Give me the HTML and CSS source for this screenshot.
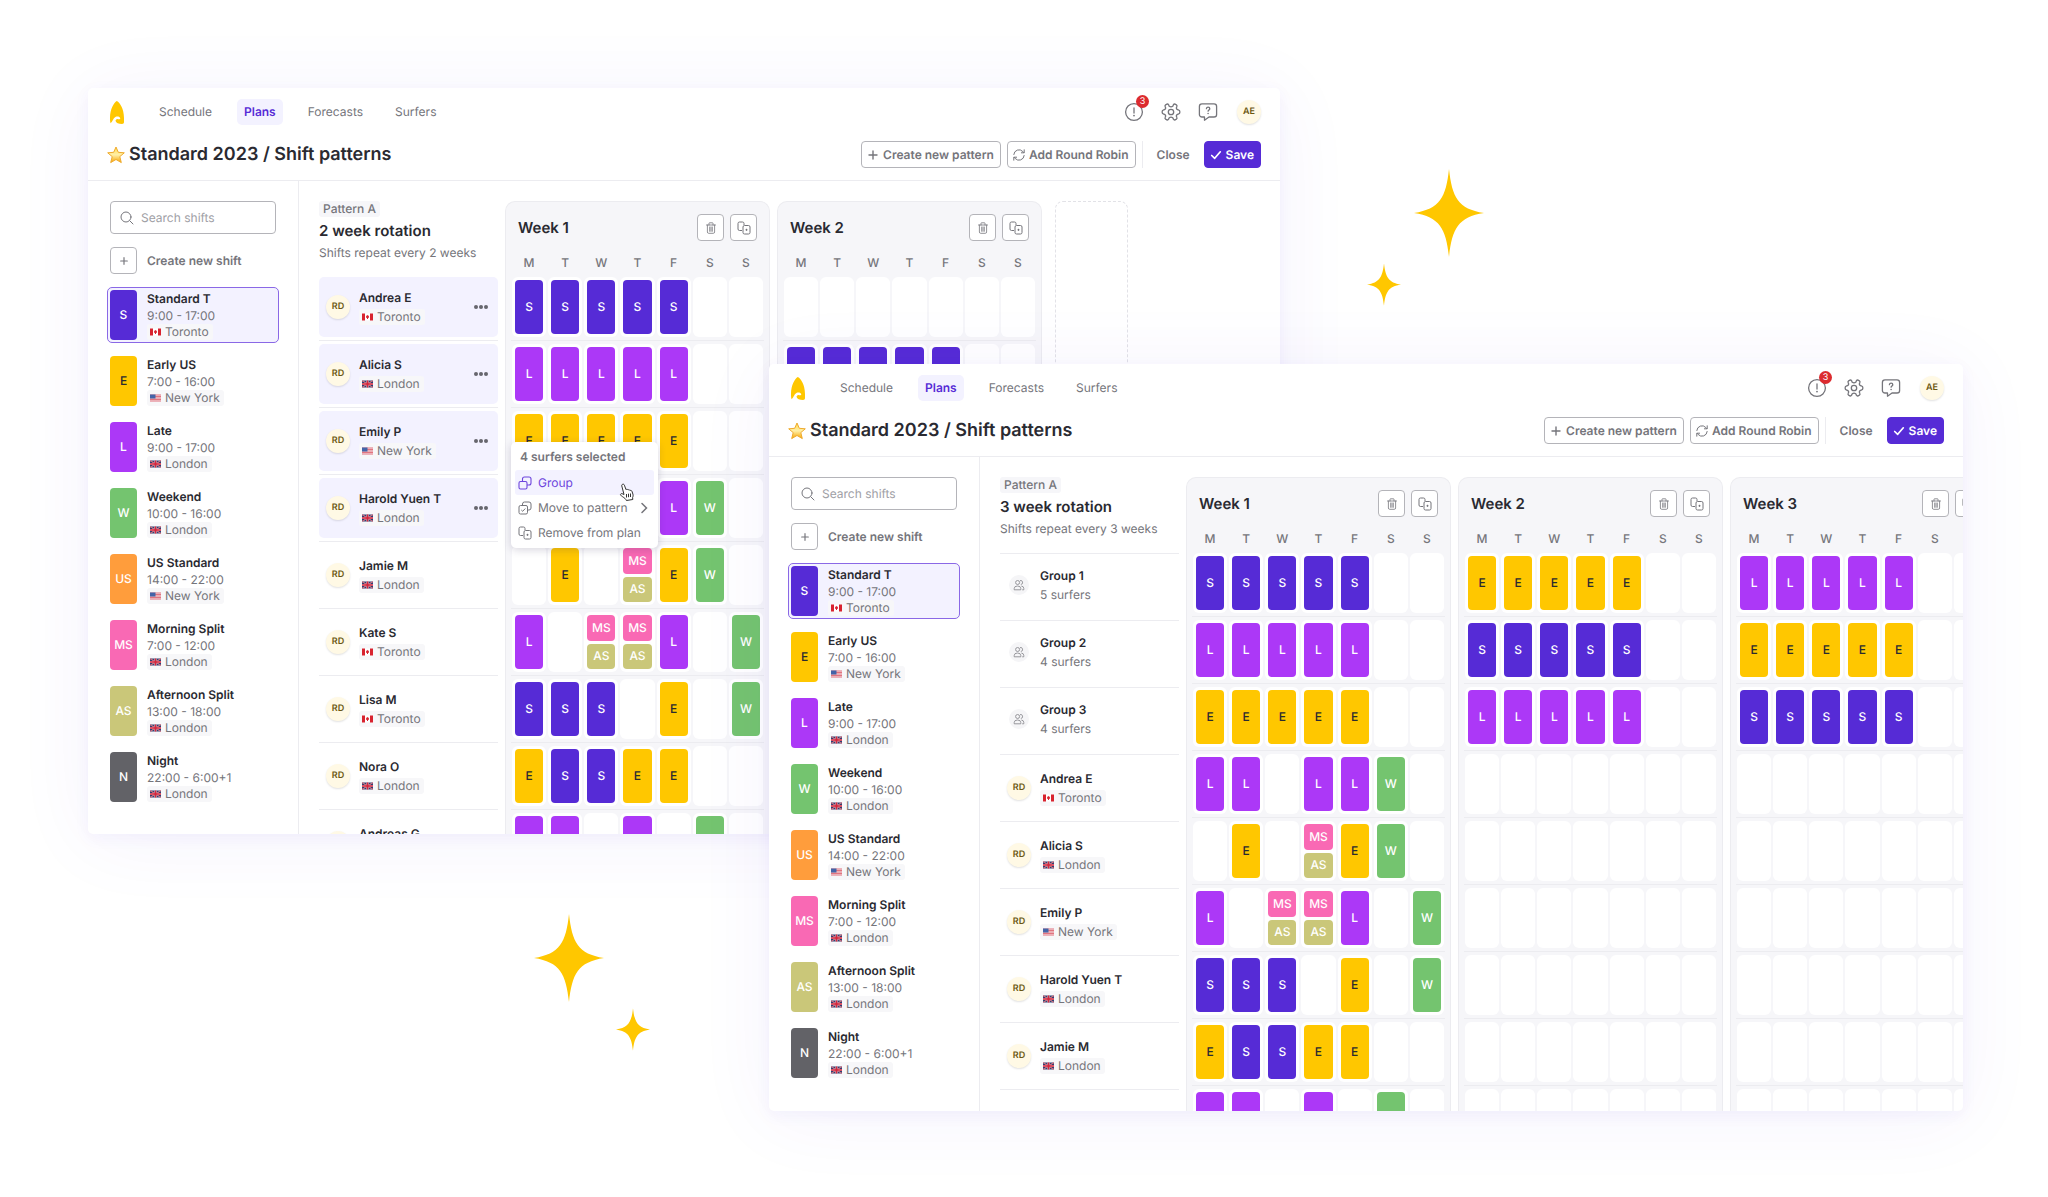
FILE: index.html
```html
<!DOCTYPE html>
<html lang="en">
<head>
<meta charset="utf-8">
<meta name="viewport" content="width=device-width, initial-scale=1">
<title>Shift patterns</title>
<link rel="stylesheet" href="styles.css">
</head>
<body>
<svg class="sprite" aria-hidden="true">
  <symbol id="logo" viewBox="0 0 14 23"><path fill="#ffc700" d="M6.800 0C10 1.600 14 8 14 17v4c0 1.400-.8 1.900-2 1.900-3.400 0-6-.9-6.400-2.900-.2-1.200.7-2.200 2-2.100.7.100 1.200.5 1.900.3.700-.2.900-.7.600-1.200-.9-1.400-2.900-1.800-4.700-.9C3 17.300 2.700 20.900.6 22.200 0 21 0 18.500 0 17 0 8 4 1.600 6.800 0z"/></symbol>
  <symbol id="star" viewBox="0 0 18 18"><defs><linearGradient id="gold" x1="0" y1="0" x2="0" y2="1"><stop offset="0" stop-color="#ffd84a"/><stop offset=".5" stop-color="#fff0a8"/><stop offset="1" stop-color="#f7a400"/></linearGradient></defs><path fill="url(#gold)" stroke="#eeaa2e" stroke-linejoin="round" d="M9 1l2.300 5.300 6 .5-4.500 3.800 1.500 6L9 13.500 3.700 16.600l1.500-6L.7 6.800l6-.5z"/></symbol>
  <symbol id="alert" viewBox="0 0 20 20"><g fill="none" stroke="currentColor" stroke-width="1.300" stroke-linecap="round"><circle cx="10" cy="10" r="8.400"/><path d="M10 6v5"/></g><circle cx="10" cy="13.600" r=".9" fill="currentColor"/></symbol>
  <symbol id="gear" viewBox="0 0 20 20"><g fill="none" stroke="currentColor" stroke-width="1.300" stroke-linejoin="round"><circle cx="10" cy="10" r="2.700"/><path d="M8.200 4.300 7.600 2.800Q6.900 1.600 5.700 2.200L4.600 2.900Q3.600 3.600 4.200 4.800L4.700 6Q4.400 7.500 3 7.900L2.300 8Q1.200 8.400 1.200 9.400v1.200q0 1 1.100 1.400l.7.100q1.400.4 1.700 1.900l-.5 1.200q-.6 1.200.4 1.900l1.100.7q1.200.6 1.900-.6l.6-1.500q1.800-1 3.600 0l.6 1.500q.7 1.200 1.900.6l1.100-.7q1-.7.4-1.900l-.5-1.200q.3-1.500 1.700-1.900l.7-.1q1.100-.4 1.100-1.400V9.400q0-1-1.100-1.400l-.7-.1q-1.400-.4-1.700-1.900l.5-1.200q.6-1.200-.4-1.900l-1.100-.7q-1.200-.6-1.900.6l-.6 1.500q-1.800 1-3.600 0z"/></g></symbol>
  <symbol id="help" viewBox="0 0 20 20"><g fill="none" stroke="currentColor" stroke-width="1.300" stroke-linejoin="round" stroke-linecap="round"><path d="M4 1.800h12a2.600 2.600 0 0 1 2.600 2.600v8a2.600 2.600 0 0 1-2.600 2.600h-5l-4.500 3.200V15H4a2.600 2.600 0 0 1-2.600-2.600v-8A2.600 2.600 0 0 1 4 1.800z"/><path d="M8.400 6.700c.1-1 .8-1.500 1.700-1.500 1 0 1.700.6 1.700 1.500 0 1.200-1.700 1.300-1.700 2.500"/></g><circle cx="10.100" cy="11.500" r=".8" fill="currentColor"/></symbol>
  <symbol id="plus" viewBox="0 0 12 12"><path d="M6 2v8M2 6h8" fill="none" stroke="currentColor" stroke-width="1.400" stroke-linecap="round"/></symbol>
  <symbol id="cycle" viewBox="0 0 12 12"><path d="M.8 5.500A5.200 5.200 0 0 1 9.800 2.500L11 3.700M11.200.8v3H8.400M11.200 6.500a5.200 5.200 0 0 1-9 3L1 8.300M.8 11.200v-3h2.800" fill="none" stroke="currentColor" stroke-linecap="round" stroke-linejoin="round"/></symbol>
  <symbol id="check" viewBox="0 0 12 12"><path d="M1.700 6.500 4.700 9.300 10.300 2.800" fill="none" stroke="currentColor" stroke-width="1.700" stroke-linecap="round" stroke-linejoin="round"/></symbol>
  <symbol id="search" viewBox="0 0 14 14"><path d="M9.900 9.900 13 13M11 6A5 5 0 1 1 1 6a5 5 0 0 1 10 0z" fill="none" stroke="currentColor" stroke-linecap="round"/></symbol>
  <symbol id="trash" viewBox="0 0 12 12"><path d="M1.500 3h9M4 3V1.300Q4 .8 4.500.8h3q.5 0 .5.500V3M2.400 3v7q0 1.300 1.300 1.300h4.600q1.300 0 1.300-1.300V3M4.700 5v4.300M6 5v4.300M7.300 5v4.300" fill="none" stroke="currentColor" stroke-width=".8" stroke-linecap="round"/></symbol>
  <symbol id="copy" viewBox="0 0 14 14"><path d="M5 9.500H2.500Q1 9.500 1 8V2.500Q1 1 2.500 1H5.500Q7 1 7 2.500V4M7.500 4.500h4Q13 4.500 13 6v5.500Q13 13 11.500 13h-4Q6 13 6 11.500V6Q6 4.500 7.500 4.500zM8.500 8.800h2M9.500 7.800v2" fill="none" stroke="currentColor"/></symbol>
  <symbol id="group" viewBox="0 0 14 14"><path d="M2.500 5.500h5Q9 5.500 9 7v4.500Q9 13 7.500 13h-5Q1 13 1 11.500V7q0-1.500 1.500-1.500zM4.500 5.500V3Q4.500 1 6.500 1H11Q13 1 13 3v4Q13 9 11 9H9" fill="none" stroke="currentColor" stroke-width="1.100"/></symbol>
  <symbol id="move" viewBox="0 0 14 14"><path d="M2.500 4.500h5.500Q9.500 4.500 9.500 6v5.500Q9.500 13 8 13H2.500Q1 13 1 11.500V6q0-1.500 1.500-1.500zM4.500 4.500V3Q4.500 1 6.500 1H11Q13 1 13 3v4Q13 9 11 9H9.500M3.300 9l1.400 1.300L7.300 7.500" fill="none" stroke="currentColor"/></symbol>
  <symbol id="chevron" viewBox="0 0 8 12"><path d="M2 1.500 6.500 6 2 10.500" fill="none" stroke="currentColor" stroke-width="1.500" stroke-linecap="round"/></symbol>
  <symbol id="people" viewBox="0 0 12 12"><path d="M6.600 3.500a2 2 0 1 1-4 0 2 2 0 0 1 4 0zM1.200 10.800V9.500Q1.200 7 4.500 7t3.300 2.500v1.300zM7 1.600a2 2 0 1 1 .8 3.900M9.200 10.800h1.600V9.500Q10.800 7.300 8.300 7" fill="none" stroke="currentColor" stroke-width=".9"/></symbol>
  <symbol id="ca" viewBox="0 0 11 8"><path fill="#fff" d="M0 .5h11v7H0z"/><path fill="#d8232f" d="M0 .5h3v7H0zM8 .5h3v7H8zM5.500 1.800l.6 1 1-.1-.4 1.300.3.700-1 .4v1h-1v-1l-1-.4.3-.7L3.900 2.700l1 .1z"/></symbol>
  <symbol id="gb" viewBox="0 0 11 8"><path fill="#2f4172" d="M0 .5h11v7H0z"/><path stroke="#e3ccd2" d="M0 .5l11 7M11 .5l-11 7"/><path stroke="#eccfd6" stroke-width="2.200" d="M5.500.5v7M0 4h11"/><path stroke="#d3263c" stroke-width="1.500" d="M5.500.5v7M0 4h11"/><path stroke="#d3263c" stroke-width=".6" d="M0 .5l11 7M11 .5l-11 7"/></symbol>
  <symbol id="us" viewBox="0 0 11 8"><path fill="#f6e9ec" d="M0 .5h11v7H0z"/><path stroke="#dc5565" stroke-width=".8" d="M0 1h11M0 2.500h11M0 4h11M0 5.500h11M0 7h11"/><path fill="#4464a8" d="M0 .5h5.500v4H0z"/></symbol>
  <symbol id="sparkle" viewBox="0 0 70 88"><path fill="#ffc700" d="M35 0C38 28 44 40 70 44 44 48 38 60 35 88 32 60 26 48 0 44 26 40 32 28 35 0z"/></symbol>
  <symbol id="hand" viewBox="0 0 16 18"><path fill="#fff" stroke="#333" stroke-linejoin="round" d="M3.200 1.500c.8-.7 1.900-.3 2.200.7L7 6.700c.6-.7 1.700-.5 2 .3.700-.6 1.600-.3 2 .5.800-.4 1.700.1 2 .9l.9 2.700c.4 1.300.2 2.400-.3 3.500l.2 1.900-6.400 1c-.6-1.700-2.200-2.700-3.700-3.700-1-.7-2-1.200-2.200-2.100-.1-.8.8-1.300 1.600-1l1.900.8L2.800 3c-.2-.6-.1-1.100.4-1.500z"/><path stroke="#333" d="M7.500 11v3.500M9.500 10.700v3.500M11.500 10.500v3.500"/></symbol>
</svg>

<main class="stage">
  <section class="window window--back" data-plan="two-week">
    <header class="topbar">
      <div class="topbar__row">
        <a class="logo" href="#" aria-label="Home"><svg><use href="#logo"/></svg></a>
        <nav class="nav"><a href="#">Schedule</a><a class="is-current" href="#">Plans</a><a href="#">Forecasts</a><a href="#">Surfers</a></nav>
        <div class="tools">
          <button class="tool" aria-label="Alerts"><svg><use href="#alert"/></svg><span class="tool__count">3</span></button>
          <button class="tool" aria-label="Settings"><svg><use href="#gear"/></svg></button>
          <button class="tool" aria-label="Help"><svg><use href="#help"/></svg></button>
          <span class="avatar avatar--me">AE</span>
        </div>
      </div>
      <div class="topbar__row">
        <h1 class="title"><svg><use href="#star"/></svg>Standard 2023 / Shift patterns</h1>
        <div class="actions">
          <button class="btn"><svg><use href="#plus"/></svg>Create new pattern</button>
          <button class="btn"><svg><use href="#cycle"/></svg>Add Round Robin</button>
          <span class="actions__rule"></span>
          <button class="btn btn--text">Close</button>
          <button class="btn btn--primary"><svg><use href="#check"/></svg>Save</button>
        </div>
      </div>
    </header>
    <div class="workspace">
      <aside class="sidebar">
        <label class="search"><svg><use href="#search"/></svg><input type="search" placeholder="Search shifts" aria-label="Search shifts"></label>
        <button class="create"><span class="square"><svg><use href="#plus"/></svg></span>Create new shift</button>
        <ul class="shifts"></ul>
      </aside>
      <div class="pattern">
        <div class="pattern__people">
          <div class="pattern__intro"><span class="tag">Pattern A</span><h2>2 week rotation</h2><p>Shifts repeat every 2 weeks</p></div>
          <ul class="people"></ul>
        </div>
        <div class="weeks"></div>
      </div>
    </div>
    <div class="menu" role="menu">
      <p class="menu__title">4 surfers selected</p>
      <button class="menu__item is-hovered" role="menuitem"><svg><use href="#group"/></svg>Group</button>
      <button class="menu__item" role="menuitem"><svg><use href="#move"/></svg>Move to pattern<svg class="menu__more"><use href="#chevron"/></svg></button>
      <button class="menu__item" role="menuitem"><svg><use href="#copy"/></svg>Remove from plan</button>
      <svg class="menu__cursor"><use href="#hand"/></svg>
    </div>
  </section>

  <section class="window window--front" data-plan="three-week">
    <header class="topbar">
      <div class="topbar__row">
        <a class="logo" href="#" aria-label="Home"><svg><use href="#logo"/></svg></a>
        <nav class="nav"><a href="#">Schedule</a><a class="is-current" href="#">Plans</a><a href="#">Forecasts</a><a href="#">Surfers</a></nav>
        <div class="tools">
          <button class="tool" aria-label="Alerts"><svg><use href="#alert"/></svg><span class="tool__count">3</span></button>
          <button class="tool" aria-label="Settings"><svg><use href="#gear"/></svg></button>
          <button class="tool" aria-label="Help"><svg><use href="#help"/></svg></button>
          <span class="avatar avatar--me">AE</span>
        </div>
      </div>
      <div class="topbar__row">
        <h1 class="title"><svg><use href="#star"/></svg>Standard 2023 / Shift patterns</h1>
        <div class="actions">
          <button class="btn"><svg><use href="#plus"/></svg>Create new pattern</button>
          <button class="btn"><svg><use href="#cycle"/></svg>Add Round Robin</button>
          <span class="actions__rule"></span>
          <button class="btn btn--text">Close</button>
          <button class="btn btn--primary"><svg><use href="#check"/></svg>Save</button>
        </div>
      </div>
    </header>
    <div class="workspace">
      <aside class="sidebar">
        <label class="search"><svg><use href="#search"/></svg><input type="search" placeholder="Search shifts" aria-label="Search shifts"></label>
        <button class="create"><span class="square"><svg><use href="#plus"/></svg></span>Create new shift</button>
        <ul class="shifts"></ul>
      </aside>
      <div class="pattern">
        <div class="pattern__people">
          <div class="pattern__intro"><span class="tag">Pattern A</span><h2>3 week rotation</h2><p>Shifts repeat every 3 weeks</p></div>
          <ul class="people people--grouped"></ul>
        </div>
        <div class="weeks"></div>
      </div>
    </div>
  </section>

  <svg class="sparkle sparkle--1"><use href="#sparkle"/></svg>
  <svg class="sparkle sparkle--2"><use href="#sparkle"/></svg>
  <svg class="sparkle sparkle--3"><use href="#sparkle"/></svg>
  <svg class="sparkle sparkle--4"><use href="#sparkle"/></svg>
</main>
<script src="app.js"></script>
</body>
</html>
```
FILE: styles.css
```css
:root {
  --violet: #562bd6;
  --lavender: #f3f2ff;
  --ink: #2a2a31;
  --grey: #75757b;
  --line: #ececf0;
  --outline: #b4b4b9;
  --panel: #f6f6f9;
}

* { box-sizing: border-box; }

body {
  margin: 0;
  background: #fff;
  color: var(--ink);
  font: 400 12px/16px Inter, "Liberation Sans", sans-serif;
  text-rendering: geometricPrecision;
}

button, input { font: inherit; color: inherit; text-rendering: inherit; }
button { padding: 0; border: 0; background: none; cursor: pointer; }
a { color: inherit; text-decoration: none; }
ul { margin: 0; padding: 0; list-style: none; }
h1, h2, p { margin: 0; }
svg { display: block; flex: none; }

.sprite { position: absolute; width: 0; height: 0; }

.stage {
  position: relative;
  height: 100vh;
  min-height: 900px;
  overflow: hidden;
}

/* Overlapping app windows */
.window {
  position: absolute;
  display: flex;
  flex-direction: column;
  overflow: hidden;
  border-radius: 5px;
  background: #fff;
  box-shadow: 0 6px 80px rgba(86, 43, 214, .06), 0 4px 16px rgba(86, 43, 214, .05);
}
.window--back { inset: 88px 768px 363px 88px; }
.window--front { inset: 364px 85px 86px 769px; }

/* Top bar */
.topbar {
  display: flex;
  flex-direction: column;
  gap: 16px;
  padding: 11px 19px 12px;
  border-bottom: 1px solid var(--line);
}
.topbar__row { display: flex; align-items: center; min-height: 26px; }
.logo { padding-left: 3px; }
.logo svg { width: 14px; height: 23px; }
.nav { display: flex; gap: 18px; margin-left: 28px; color: var(--grey); }
.nav a { padding: 5px 7px; border-radius: 5px; }
.nav .is-current { background: var(--lavender); color: var(--violet); font-weight: 600; }
.tools { display: flex; align-items: center; gap: 17px; margin-left: auto; color: var(--grey); }
.tool { position: relative; }
.tool svg { width: 20px; height: 20px; }
.tool__count {
  position: absolute;
  top: -7px;
  right: -5px;
  width: 13px;
  height: 13px;
  border-radius: 50%;
  background: #dc2b2f;
  color: #fff;
  font-size: 9px;
  line-height: 13px;
}
.avatar {
  display: grid;
  place-items: center;
  width: 24px;
  height: 24px;
  border-radius: 50%;
  background: #fff9e5;
  box-shadow: 0 1px 2px rgba(0, 0, 0, .12);
  color: #6b5710;
  font-size: 9px;
  font-weight: 600;
}
.tools .avatar { margin-left: 2px; }
.title { display: flex; align-items: center; gap: 4px; font-size: 18px; line-height: 24px; font-weight: 600; }
.title svg { width: 18px; height: 18px; }
.actions { display: flex; align-items: center; gap: 6px; margin-left: auto; }
.btn {
  display: flex;
  align-items: center;
  gap: 4px;
  height: 27px;
  padding: 0 6px 0 5px;
  border: 1px solid var(--outline);
  border-radius: 4px;
  color: var(--grey);
  font-weight: 600;
}
.btn svg { width: 12px; height: 12px; }
.btn--text { padding: 0 7px; border-color: transparent; }
.btn--primary { border-color: var(--violet); background: var(--violet); color: #fff; }
.actions__rule { width: 1px; height: 27px; background: var(--line); }

/* Sidebar */
.workspace { display: flex; flex: 1; min-height: 0; }
.sidebar { flex: none; width: 211px; padding: 20px 19px 0; border-right: 1px solid var(--line); }
.search {
  display: flex;
  align-items: center;
  gap: 7px;
  height: 33px;
  margin: 0 3px;
  padding: 0 9px;
  border: 1px solid var(--outline);
  border-radius: 4px;
  color: var(--grey);
}
.search svg { width: 14px; height: 14px; }
.search input { width: 100%; min-width: 0; padding: 0; border: 0; outline: 0; background: none; }
.search input::placeholder { color: #a0a0a5; }
.create { display: flex; align-items: center; gap: 10px; margin: 13px 3px; color: var(--grey); font-weight: 600; }
.square {
  display: grid;
  place-items: center;
  width: 27px;
  height: 27px;
  border: 1px solid var(--outline);
  border-radius: 4px;
  background: #fff;
  color: var(--grey);
}
.square svg { width: 12px; height: 12px; }
.create .square svg { width: 10px; height: 10px; }
.shifts { display: grid; gap: 10px; }
.shift { display: flex; gap: 10px; padding: 2px; border: 1px solid transparent; border-radius: 5px; }
.shift.is-selected { border-color: #8a68e6; background: var(--lavender); }
.shift__key { width: 27px; }
.shift__text { display: flex; flex-direction: column; align-items: flex-start; line-height: 17px; color: var(--grey); }
.name { color: var(--ink); font-weight: 600; }
.place {
  display: flex;
  align-items: center;
  gap: 4px;
  padding: 0 4px 0 3px;
  border-radius: 3px;
  background: #f7f7f9;
  color: var(--grey);
  line-height: 16px;
}
.place svg { width: 11px; height: 8px; }

/* Coloured shift tiles */
.tile {
  display: grid;
  place-items: center;
  border-radius: 4px;
  color: #fff;
  font-weight: 500;
}
.tile--S { background: #562bd6; }
.tile--E { background: #ffc700; color: var(--ink); }
.tile--L { background: #ac38f7; }
.tile--W { background: #74c46f; }
.tile--US { background: #ff9d3c; }
.tile--MS { background: #f969b4; }
.tile--AS { background: #cac779; }
.tile--N { background: #626267; }

/* Pattern: people and weeks */
.pattern { display: flex; flex: 1; gap: 7px; min-width: 0; padding: 20px 0 0 20px; }
.pattern__people { flex: none; width: 179px; }
.pattern__intro { display: flex; flex-direction: column; align-items: flex-start; height: 76px; }
.tag { padding: 0 4px; border-radius: 3px; background: var(--panel); color: var(--grey); font-weight: 500; }
h2 { font-size: 15px; line-height: 20px; font-weight: 600; }
.pattern__intro h2 { margin-top: 4px; }
.pattern__intro p { margin-top: 4px; color: var(--grey); }
.person { height: 67px; padding: 3px 0; border-bottom: 1px solid var(--line); }
.person:first-child { height: 64px; padding-top: 0; }
.person__card { display: flex; align-items: center; gap: 9px; height: 60px; padding: 0 10px 0 7px; border-radius: 5px; }
.person__card.is-selected { background: var(--lavender); }
.person__card--group { padding-bottom: 4px; }
.person__text { display: flex; flex-direction: column; align-items: flex-start; gap: 3px; }
.person__sub { color: var(--grey); }
.person__icon { display: grid; place-items: center; width: 20px; height: 20px; margin: 0 2px; border-radius: 50%; background: #f5f5f7; color: #8d8d93; }
.person__icon svg { width: 12px; height: 12px; }
.dots { display: flex; gap: 1px; margin-left: auto; }
.dots i { width: 4px; height: 4px; border-radius: 50%; background: #66666d; }
.people--grouped { border-top: 1px solid var(--line); }
.people--grouped .person:first-child { height: 67px; padding-top: 3px; }

.weeks { display: flex; flex: 1; gap: 7px; min-width: 0; overflow: hidden; }
.week {
  flex: none;
  width: 265px;
  border: 1px solid var(--line);
  border-bottom: 0;
  border-radius: 10px 10px 0 0;
  background: var(--panel);
}
.week__head { display: flex; align-items: center; gap: 6px; padding: 12px 12px 0; }
.week__head h2 { margin-right: auto; }
.square svg.icon-copy { width: 14px; height: 14px; }
.grid { width: 253px; margin: 0 5px; border-collapse: collapse; table-layout: fixed; }
.grid th { height: 36px; padding: 7px 0 0; color: var(--grey); font-weight: 500; }
.grid td { padding: 3px 1px; border-bottom: 1px solid var(--line); }
.grid tr:first-child td { padding-top: 0; }
.cell { display: flex; flex-direction: column; gap: 3px; height: 60px; padding: 3px; border-radius: 6px; background: #fff; }
.cell .tile { flex: 1; }
.slot { flex: none; width: 73px; margin-left: 6px; border: 1px dashed #e2e2e7; border-bottom: 0; border-radius: 8px 8px 0 0; }

/* Context menu over the grid */
.menu {
  position: absolute;
  top: 354px;
  left: 423px;
  width: 147px;
  padding: 6px 4px 3px;
  border-radius: 5px;
  background: #fff;
  box-shadow: 0 2px 8px rgba(40, 30, 80, .18);
  color: var(--grey);
}
.menu__title { padding: 1px 5px 5px; font-weight: 600; }
.menu__item { display: flex; align-items: center; gap: 6px; width: 100%; height: 25px; padding: 0 3px; border-radius: 3px; }
.menu__item.is-hovered { background: var(--lavender); color: #6d45dd; }
.menu__item svg { width: 14px; height: 14px; }
.menu__item .menu__more { width: 8px; height: 12px; margin-left: auto; margin-right: 3px; }
.menu__cursor { position: absolute; top: 41px; left: 108px; width: 16px; height: 18px; }

/* Decorative sparkles */
.sparkle { position: absolute; width: 70px; height: 88px; }
.sparkle--1 { left: 1414px; top: 169px; }
.sparkle--2 { left: 1367px; top: 263px; width: 34px; height: 43px; }
.sparkle--3 { left: 534px; top: 914px; }
.sparkle--4 { left: 616px; top: 1008px; width: 34px; height: 43px; }
```
FILE: app.js
```js
const places = { ca: 'Toronto', gb: 'London', us: 'New York' };

const shifts = [
  ['S', 'Standard T', '9:00 - 17:00', 'ca'],
  ['E', 'Early US', '7:00 - 16:00', 'us'],
  ['L', 'Late', '9:00 - 17:00', 'gb'],
  ['W', 'Weekend', '10:00 - 16:00', 'gb'],
  ['US', 'US Standard', '14:00 - 22:00', 'us'],
  ['MS', 'Morning Split', '7:00 - 12:00', 'gb'],
  ['AS', 'Afternoon Split', '13:00 - 18:00', 'gb'],
  ['N', 'Night', '22:00 - 6:00+1', 'gb'],
];

// One string per row, one entry per day; "-" is a free day, "/" splits a day.
const S = 'S S S S S - -';
const L = 'L L L L L - -';
const E = 'E E E E E - -';
const free = '- - - - - - -';
const rest = [
  'L L - L L W -',
  '- E - MS/AS E W -',
  'L - MS/AS MS/AS L - W',
  'S S S - E - W',
  'E S S E E - -',
  'L L - L - W -',
];
const freeRows = Array(6).fill(free);

const plans = {
  'two-week': {
    people: [
      ['Andrea E', 'ca', true], ['Alicia S', 'gb', true], ['Emily P', 'us', true], ['Harold Yuen T', 'gb', true],
      ['Jamie M', 'gb'], ['Kate S', 'ca'], ['Lisa M', 'ca'], ['Nora O', 'gb'], ['Andreas G', 'gb'],
    ],
    weeks: [[S, L, E, ...rest], [free, S, L, ...freeRows]],
    slot: true,
  },
  'three-week': {
    groups: [['Group 1', '5 surfers'], ['Group 2', '4 surfers'], ['Group 3', '4 surfers']],
    people: [['Andrea E', 'ca'], ['Alicia S', 'gb'], ['Emily P', 'us'], ['Harold Yuen T', 'gb'], ['Jamie M', 'gb']],
    weeks: [[S, L, E, ...rest], [E, S, L, ...freeRows], [L, E, S, ...freeRows]],
  },
};

const icon = (id, cls = '') => `<svg class="${cls}"><use href="#${id}"/></svg>`;
const place = (code) => `<span class="place">${icon(code)}${places[code]}</span>`;
const tile = (key, cls = '') => `<span class="tile tile--${key} ${cls}">${key}</span>`;

const shiftItem = ([key, name, hours, code], i) => `
  <li class="shift ${i === 0 ? 'is-selected' : ''}">${tile(key, 'shift__key')}
    <div class="shift__text"><span class="name">${name}</span><span>${hours}</span>${place(code)}</div>
  </li>`;

const groupItem = ([name, size]) => `
  <li class="person"><div class="person__card person__card--group"><span class="person__icon">${icon('people')}</span>
    <div class="person__text"><span class="name">${name}</span><span class="person__sub">${size}</span></div>
  </div></li>`;

const personItem = ([name, code, selected]) => `
  <li class="person"><div class="person__card ${selected ? 'is-selected' : ''}"><span class="avatar">RD</span>
    <div class="person__text"><span class="name">${name}</span>${place(code)}</div>
    ${selected ? '<span class="dots"><i></i><i></i><i></i></span>' : ''}
  </div></li>`;

const dayCell = (day) =>
  `<td><div class="cell">${day === '-' ? '' : day.split('/').map((key) => tile(key)).join('')}</div></td>`;

const weekPanel = (rows, i) => `
  <section class="week">
    <div class="week__head"><h2>Week ${i + 1}</h2>
      <button class="square" aria-label="Delete week">${icon('trash')}</button>
      <button class="square" aria-label="Copy week">${icon('copy', 'icon-copy')}</button>
    </div>
    <table class="grid">
      <thead><tr>${[...'MTWTFSS'].map((day) => `<th scope="col">${day}</th>`).join('')}</tr></thead>
      <tbody>${rows.map((row) => `<tr>${row.split(' ').map(dayCell).join('')}</tr>`).join('')}</tbody>
    </table>
  </section>`;

document.querySelectorAll('[data-plan]').forEach((el) => {
  const plan = plans[el.dataset.plan];
  el.querySelector('.shifts').innerHTML = shifts.map(shiftItem).join('');
  el.querySelector('.people').innerHTML =
    (plan.groups || []).map(groupItem).join('') + plan.people.map(personItem).join('');
  el.querySelector('.weeks').innerHTML =
    plan.weeks.map(weekPanel).join('') + (plan.slot ? '<div class="slot"></div>' : '');
});
```
